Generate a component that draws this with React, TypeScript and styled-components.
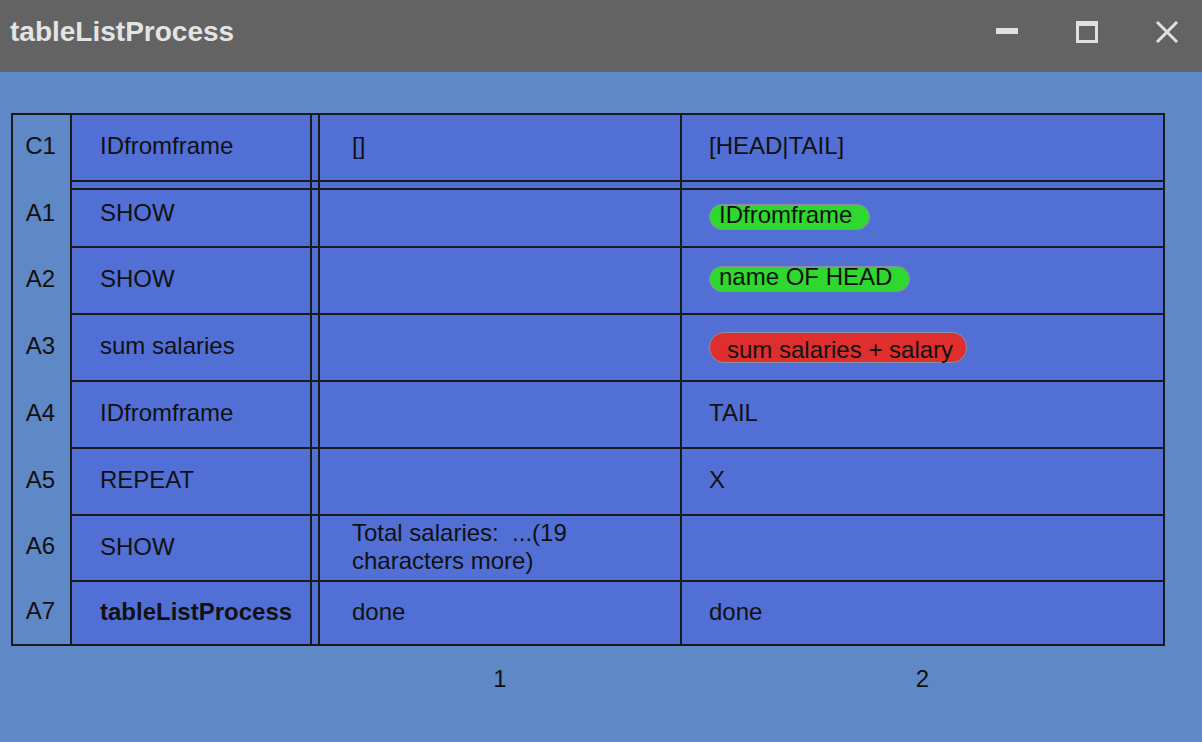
import React from "react";
import styled, { createGlobalStyle } from "styled-components";

// row / column sizes shared by the label strip, the table and the footer
const ROWS = [65, 6, 56, 65, 65, 65, 65, 64, 62];
const COLS = [238, 6, 360, 481];
const rowTemplate = ROWS.map((h) => `${h}px`).join(" ");
const colTemplate = COLS.map((w) => `${w}px`).join(" ");
const PADS = [28, 32, 27];

type CellValue =
  | string
  | { pill: "green" | "red"; text: string }
  | { lines: string[] }
  | null;

interface RowData {
  label: string;
  cells: [CellValue, CellValue, CellValue];
  lift?: boolean;
  bold?: boolean;
}

const rows: RowData[] = [
  { label: "C1", cells: ["IDfromframe", "[]", "[HEAD|TAIL]"] },
  { label: "A1", cells: ["SHOW", null, { pill: "green", text: "IDfromframe" }], lift: true },
  { label: "A2", cells: ["SHOW", null, { pill: "green", text: "name OF HEAD" }] },
  { label: "A3", cells: ["sum salaries", null, { pill: "red", text: "sum salaries + salary" }] },
  { label: "A4", cells: ["IDfromframe", null, "TAIL"] },
  { label: "A5", cells: ["REPEAT", null, "X"] },
  { label: "A6", cells: ["SHOW", { lines: ["Total salaries:  ...(19", "characters more)"] }, null] },
  { label: "A7", cells: ["tableListProcess", "done", "done"], bold: true },
];

const GlobalStyle = createGlobalStyle`
  html, body {
    margin: 0;
    padding: 0;
    background: #5f88c6;
  }
  body {
    font-family: "Liberation Sans", Arial, Helvetica, sans-serif;
    color: #111;
  }
`;

const Window = styled.div`
  display: flex;
  flex-direction: column;
  min-height: 100vh;
  background: #5f88c6;
`;

const TitleBar = styled.div`
  height: 72px;
  box-sizing: border-box;
  background: #636363;
  display: flex;
  align-items: center;
  justify-content: space-between;
  padding: 0 24px 8px 10px;
`;

const Title = styled.div`
  font-size: 28px;
  font-weight: 700;
  color: #e4e4e4;
`;

const Controls = styled.div`
  display: flex;
  gap: 58px;
  align-items: center;
`;

const Body = styled.div`
  padding: 41px 0 0 11px;
`;

const Sheet = styled.div`
  display: flex;
`;

const LabelColumn = styled.div`
  width: 57px;
  display: grid;
  grid-template-rows: ${rowTemplate};
  row-gap: 2px;
  border: 2px solid #1b1b1b;
  border-right: none;
`;

const Label = styled.div<{ $lift?: boolean }>`
  display: flex;
  align-items: center;
  justify-content: center;
  font-size: 24px;
  padding: 0 2px ${(p) => (p.$lift ? 10 : 4)}px 0;
`;

const Table = styled.div`
  display: grid;
  grid-template-columns: ${colTemplate};
  grid-template-rows: ${rowTemplate};
  gap: 2px;
  padding: 2px;
  background: #1b1b1b;
`;

const Cell = styled.div<{ $pad: number; $lift?: boolean; $bold?: boolean }>`
  background: #526fd5;
  display: flex;
  align-items: center;
  box-sizing: border-box;
  padding: 0 8px ${(p) => (p.$lift ? 10 : 3)}px ${(p) => p.$pad}px;
  font-size: 24px;
  font-weight: ${(p) => (p.$bold ? 700 : 400)};
  white-space: pre;
  min-width: 0;
`;

const Spacer = styled.div`
  background: #526fd5;
`;

const Lines = styled.div`
  line-height: 28px;
`;

const Pill = styled.div<{ $tone: "green" | "red" }>`
  box-sizing: border-box;
  display: inline-block;
  border: 1px solid #8b8fa6;
  background: ${(p) => (p.$tone === "green" ? "#2fd82f" : "#de2e2e")};
  height: ${(p) => (p.$tone === "green" ? 26 : 31)}px;
  margin-top: ${(p) => (p.$tone === "green" ? 0 : 3)}px;
  border-radius: 15px;
  line-height: 20px;
  padding: ${(p) => (p.$tone === "green" ? "0 17px 0 9px" : "7px 13px 0 17px")};
  font-size: 24px;
  white-space: nowrap;
`;

const Footer = styled.div`
  display: grid;
  grid-template-columns: 59px ${colTemplate};
  column-gap: 2px;
  margin-top: 19px;
  line-height: 28px;
  font-size: 24px;
`;

const ColumnNumber = styled.div<{ $col: number }>`
  grid-column: ${(p) => p.$col};
  text-align: center;
`;

const MinimizeIcon = () => (
  <svg width="22" height="22" viewBox="0 0 22 22">
    <rect x="0" y="7" width="22" height="6" fill="#e0e0e0" />
  </svg>
);

const MaximizeIcon = () => (
  <svg width="22" height="22" viewBox="0 0 22 22">
    <path d="M0 0H22V22H0Z M3 5H19V19H3Z" fill="#e0e0e0" fillRule="evenodd" />
  </svg>
);

const CloseIcon = () => (
  <svg width="22" height="22" viewBox="0 0 22 22">
    <path d="M2 2L20 20M20 2L2 20" stroke="#e0e0e0" strokeWidth="3" strokeLinecap="square" />
  </svg>
);

function renderValue(value: CellValue) {
  if (value === null) return null;
  if (typeof value === "string") return value;
  if ("pill" in value) return <Pill $tone={value.pill}>{value.text}</Pill>;
  return (
    <Lines>
      {value.lines.map((line) => (
        <div key={line}>{line}</div>
      ))}
    </Lines>
  );
}

export default function App() {
  const [header, ...body] = rows;

  const renderRow = (row: RowData) => {
    const [c0, c1, c2] = row.cells;
    const lift = (v: CellValue) => row.lift && typeof v === "string";
    return (
      <React.Fragment key={row.label}>
        <Cell $pad={PADS[0]} $lift={lift(c0)} $bold={row.bold}>
          {renderValue(c0)}
        </Cell>
        <Spacer />
        <Cell $pad={PADS[1]} $lift={lift(c1)}>
          {renderValue(c1)}
        </Cell>
        <Cell $pad={PADS[2]} $lift={lift(c2)}>
          {renderValue(c2)}
        </Cell>
      </React.Fragment>
    );
  };

  return (
    <Window>
      <GlobalStyle />
      <TitleBar>
        <Title>tableListProcess</Title>
        <Controls>
          <MinimizeIcon />
          <MaximizeIcon />
          <CloseIcon />
        </Controls>
      </TitleBar>
      <Body>
        <Sheet>
          <LabelColumn>
            <Label>{header.label}</Label>
            <div />
            {body.map((row) => (
              <Label key={row.label} $lift={row.lift}>
                {row.label}
              </Label>
            ))}
          </LabelColumn>
          <Table>
            {renderRow(header)}
            <Spacer />
            <Spacer />
            <Spacer />
            <Spacer />
            {body.map(renderRow)}
          </Table>
        </Sheet>
        <Footer>
          <ColumnNumber $col={4}>1</ColumnNumber>
          <ColumnNumber $col={5}>2</ColumnNumber>
        </Footer>
      </Body>
    </Window>
  );
}
